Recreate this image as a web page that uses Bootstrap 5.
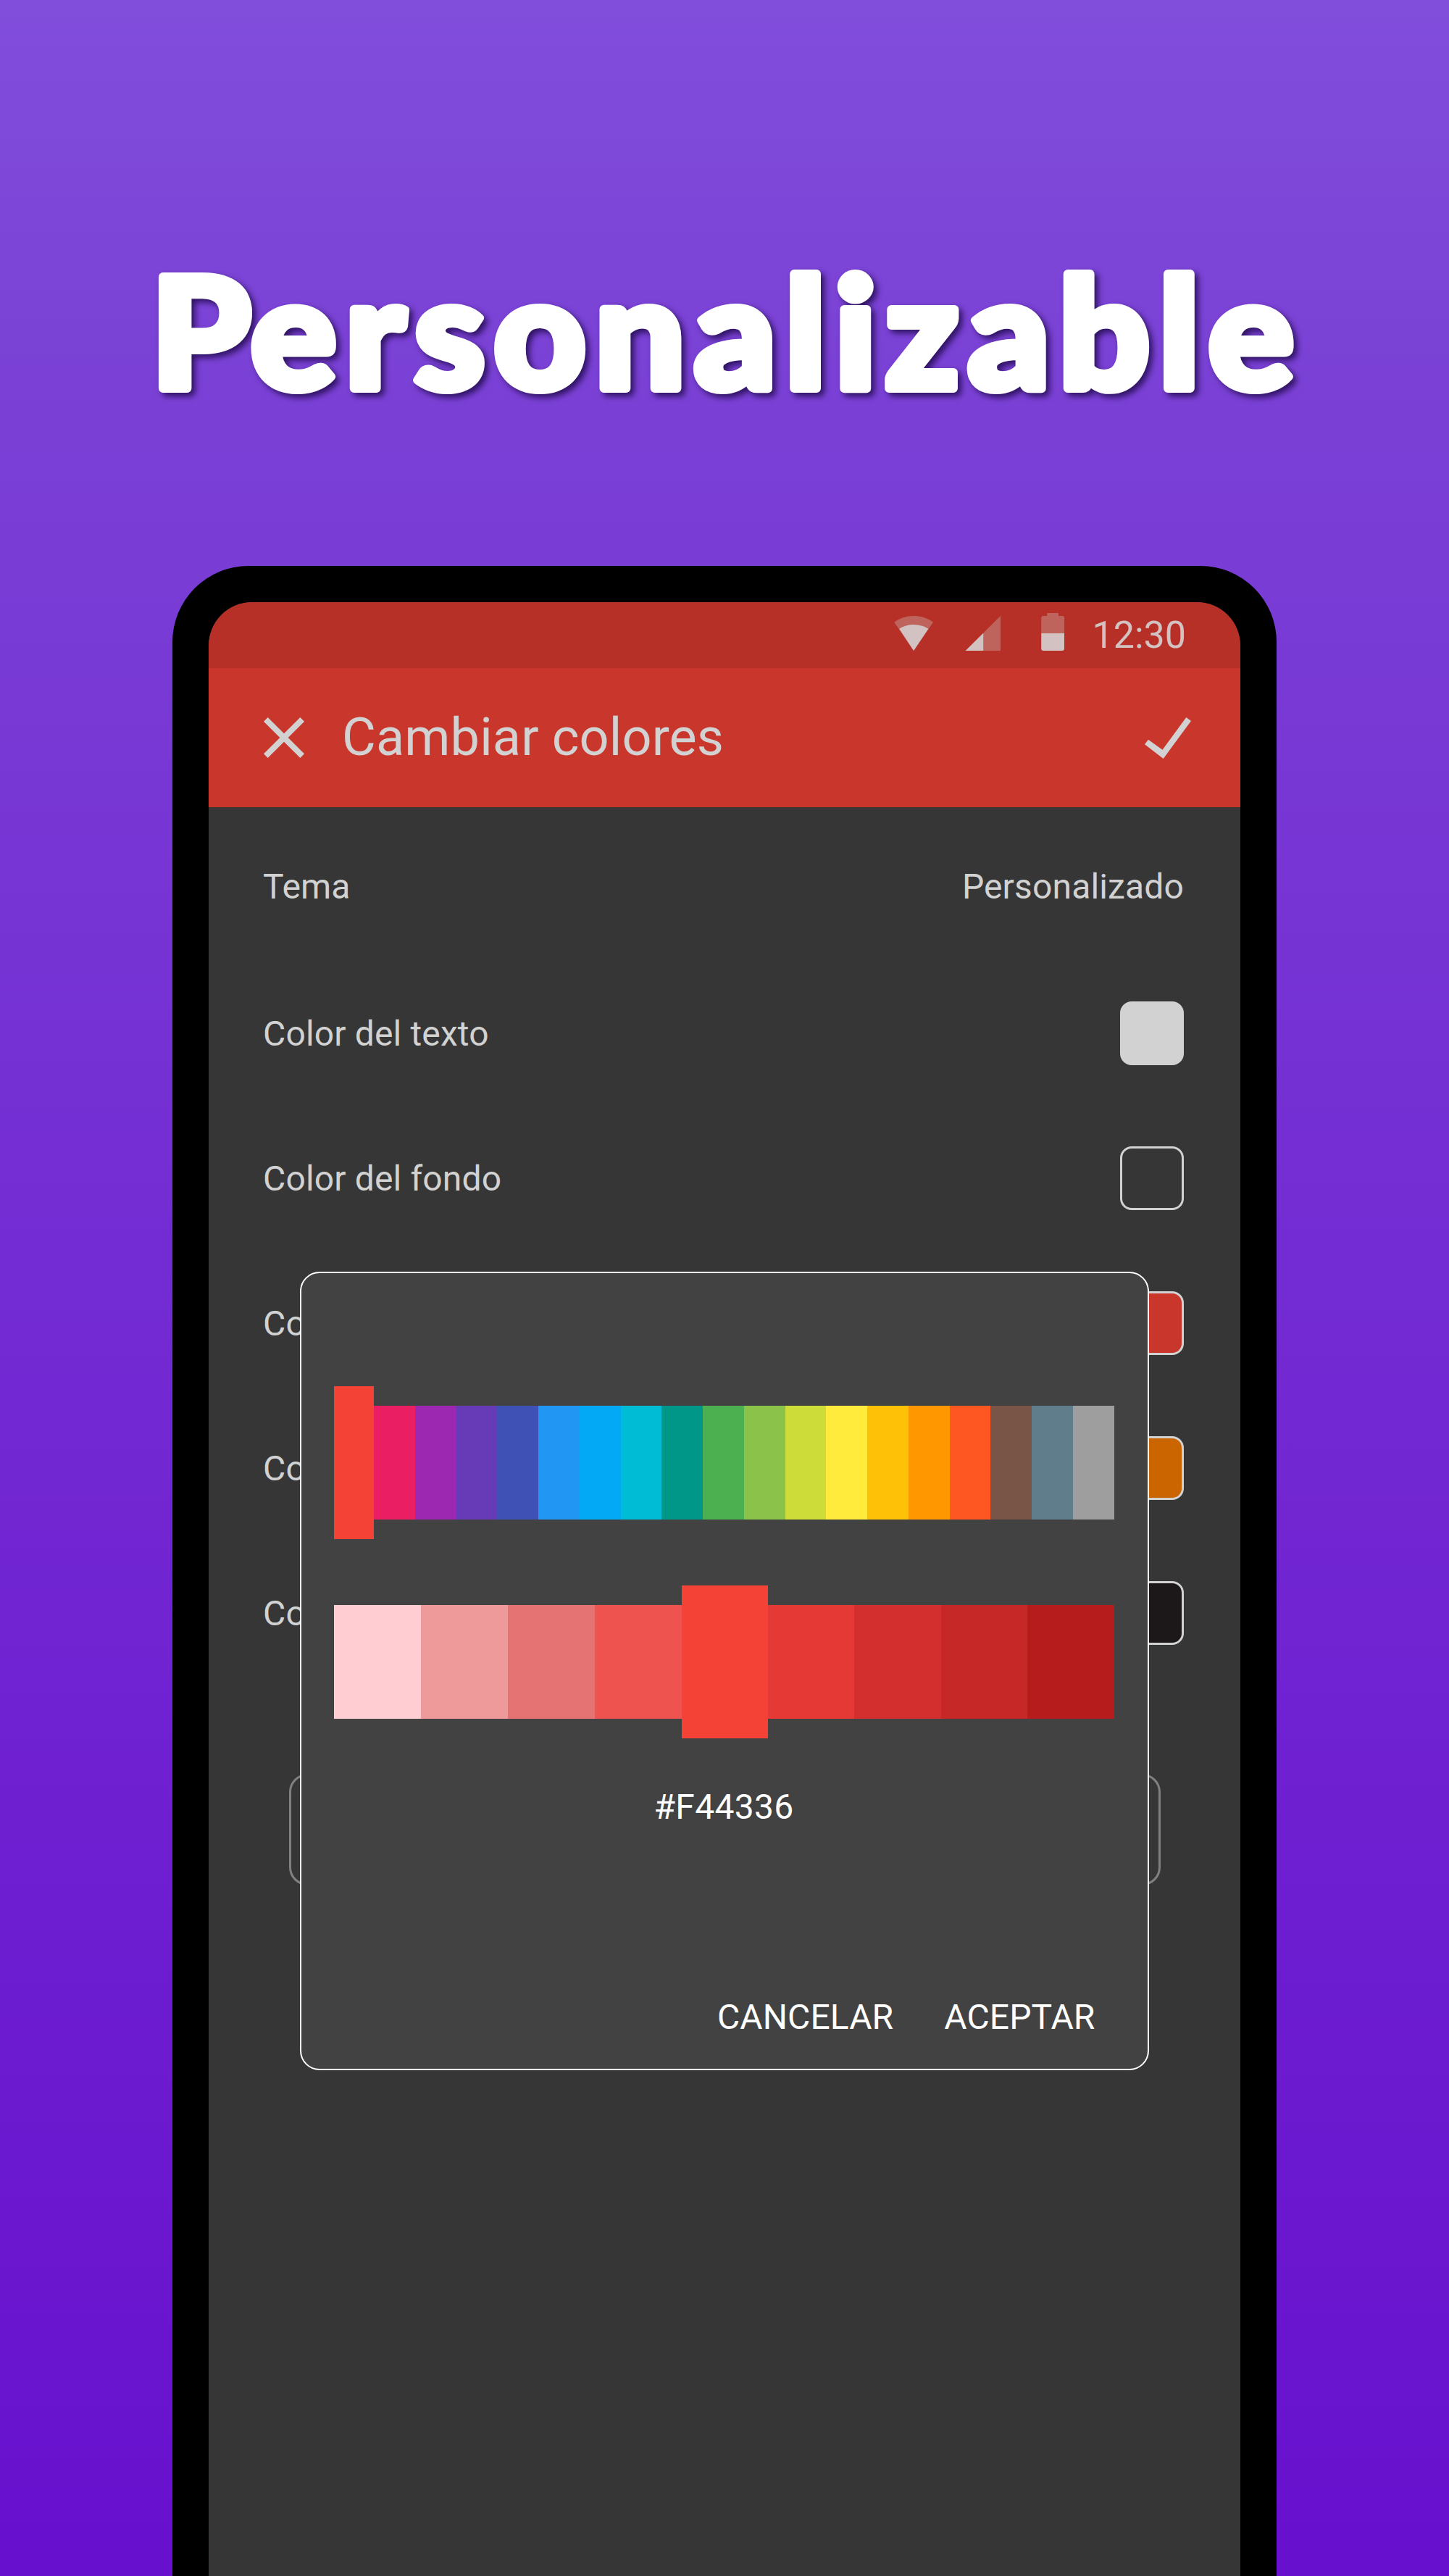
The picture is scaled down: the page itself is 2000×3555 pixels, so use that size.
<!DOCTYPE html>
<html lang="es">
<head>
<meta charset="utf-8">
<meta name="viewport" content="width=device-width, initial-scale=1">
<title>Personalizable</title>
<link rel="stylesheet" href="https://cdn.jsdelivr.net/npm/bootstrap@5.3.0/dist/css/bootstrap.min.css">
<style>
  body { font-family: Roboto, sans-serif; font-size: 48px; line-height: 56px; color: #d2d2d2; }
  .promo { height: 3555px; background: linear-gradient(#814ddb, #7b42d6 13%, #732bd3 50%, #6710ce); }
  .promo-title { height: 781px; }
  .promo-title text { font: 900 211px Lato, sans-serif; letter-spacing: 12.3px; fill: #fff; stroke: #fff; stroke-width: 12px; stroke-linejoin: round; }
  .promo-title .cap { letter-spacing: 0; }
  .promo-title svg { filter: drop-shadow(5px 5px 4px rgba(15, 0, 50, .7)); }
  .phone { width: 1524px; height: 2774px; padding: 50px 50px 0; background: #000; border-radius: 105px 105px 0 0; }
  .phone-screen { height: 2724px; background: #363636; border-radius: 60px 60px 0 0; }
  .status-strip { height: 91px; padding-right: 75px; background: #b73028; font-size: 52px; color: #d2c2c1; }
  .status-strip svg { width: 274px; height: 91px; }
  .status-strip .solid { fill: #d2c2c1; }
  .status-strip .dim { fill: #be645d; }
  .app-bar { height: 192px; padding: 0 68px 0 76px; background: #c9372c; }
  .app-bar h1 { font-size: 72px; line-height: 84px; margin-left: 52px; letter-spacing: .15px; }
  .setting { height: 200px; padding: 0 78px 0 75px; letter-spacing: .15px; }
  .setting > span { padding-top: 2px; }
  .setting-first { height: 212px; padding-top: 6px; }
  .swatch { width: 88px; height: 88px; border: 3px solid #d2d2d2; border-radius: 16px; }
  .ghost-btn { width: 1203px; height: 154px; margin-top: 122px; border: 3px solid #808080; border-radius: 25px; }
  .color-dialog { left: 126px; top: 924px; width: 1172px; height: 1102px; padding: 156px 46.5px 0 44.5px; background: #424242; border: 2px solid #fff; border-radius: 27px; color: #fff; }
  .strip { height: 211px; }
  .strip i { flex: 1 1 0; height: 157.5px; }
  .strip .picked { height: 100%; }
  .strip-hues .picked { flex-grow: .98; }
  .strip-tones { margin-top: 64px; }
  .strip-tones i:nth-child(-n+4) { flex-grow: 1.005; }
  .hex-label { margin-top: 67px; letter-spacing: .3px; }
  .dialog-actions { margin-top: 234px; padding-right: 26px; gap: 70px; }
  .dialog-actions .btn { font-size: 48px; line-height: 56px; letter-spacing: .1px; }
</style>
<script src="https://cdn.jsdelivr.net/npm/bootstrap@5.3.0/dist/js/bootstrap.bundle.min.js"></script>
</head>
<body>
<main class="promo overflow-hidden">
  <header class="promo-title">
    <svg class="d-block" width="2000" height="781" role="img" aria-label="Personalizable">
      <text x="200.6" y="536.5" transform="scale(1.04 1)"><tspan class="cap">P</tspan>ersonalizable</text>
    </svg>
  </header>
  <section class="phone mx-auto">
    <div class="phone-screen position-relative overflow-hidden">
      <div class="status-strip d-flex justify-content-end align-items-center">
        <svg viewBox="1234 831 224 91" preserveAspectRatio="xMinYMin meet" overflow="visible">
          <path class="dim" d="M1261.1 898 1234.3 858.7Q1246 850 1261.1 850T1288 858.7Z"/>
          <path class="solid" d="M1261.1 898 1241.2 867.7Q1250 862 1261.1 862T1281.4 867.7Z"/>
          <path class="dim" d="M1332.7 898 1381 850V898Z"/>
          <path class="solid" d="M1332.7 898 1357.2 873.8V898Z"/>
          <path class="dim" d="M1445.2 846H1461V850H1466.5Q1469 850 1469 853V874H1437.2V853Q1437.2 850 1440 850H1445.2Z"/>
          <path class="solid" d="M1437.2 874H1469V895Q1469 898 1466 898H1440Q1437.2 898 1437.2 895Z"/>
        </svg>
        <span>12:30</span>
      </div>
      <div class="app-bar d-flex align-items-center">
        <svg width="56" height="56" viewBox="5 5 14 14" fill="#d2d2d2"><path d="M19 6.41 17.59 5 12 10.59 6.41 5 5 6.41 10.59 12 5 17.59 6.41 19 12 13.41 17.59 19 19 17.59 13.41 12z"/></svg>
        <h1 class="fw-normal mb-0">Cambiar colores</h1>
        <svg class="ms-auto" width="64" height="57" viewBox="1580 989.5 64 57" fill="#d2d2d2"><path d="M1637.3 989.6 1644 994.4 1605.7 1046.4 1580 1026.7 1584.9 1020.2 1604.5 1034.2Z"/></svg>
      </div>
      <div class="setting setting-first d-flex justify-content-between align-items-center"><span>Tema</span><span>Personalizado</span></div>
      <div class="setting d-flex justify-content-between align-items-center"><span>Color del texto</span><div class="swatch" style="background:#d2d2d2"></div></div>
      <div class="setting d-flex justify-content-between align-items-center"><span>Color del fondo</span><div class="swatch" style="background:#363636"></div></div>
      <div class="setting d-flex justify-content-between align-items-center"><span>Color</span><div class="swatch" style="background:#c9372c"></div></div>
      <div class="setting d-flex justify-content-between align-items-center"><span>Color</span><div class="swatch" style="background:#ca6500"></div></div>
      <div class="setting d-flex justify-content-between align-items-center"><span>Color</span><div class="swatch" style="background:#1c1819"></div></div>
      <div class="ghost-btn mx-auto"></div>

      <div class="color-dialog position-absolute">
        <div class="strip strip-hues d-flex align-items-center">
          <i class="picked" style="background:#f44336"></i><i style="background:#e91e63"></i><i style="background:#9c27b0"></i><i style="background:#673ab7"></i><i style="background:#3f51b5"></i><i style="background:#2196f3"></i><i style="background:#03a9f4"></i><i style="background:#00bcd4"></i><i style="background:#009688"></i><i style="background:#4caf50"></i><i style="background:#8bc34a"></i><i style="background:#cddc39"></i><i style="background:#ffeb3b"></i><i style="background:#ffc107"></i><i style="background:#ff9800"></i><i style="background:#ff5722"></i><i style="background:#795548"></i><i style="background:#607d8b"></i><i style="background:#9e9e9e"></i>
        </div>
        <div class="strip strip-tones d-flex align-items-center">
          <i style="background:#ffcdd2"></i><i style="background:#ef9a9a"></i><i style="background:#e57373"></i><i style="background:#ef5350"></i><i class="picked" style="background:#f44336"></i><i style="background:#e53935"></i><i style="background:#d32f2f"></i><i style="background:#c62828"></i><i style="background:#b71c1c"></i>
        </div>
        <div class="hex-label text-center">#F44336</div>
        <div class="dialog-actions d-flex justify-content-end">
          <button class="btn text-white border-0 p-0">CANCELAR</button>
          <button class="btn text-white border-0 p-0">ACEPTAR</button>
        </div>
      </div>
    </div>
  </section>
</main>
</body>
</html>
